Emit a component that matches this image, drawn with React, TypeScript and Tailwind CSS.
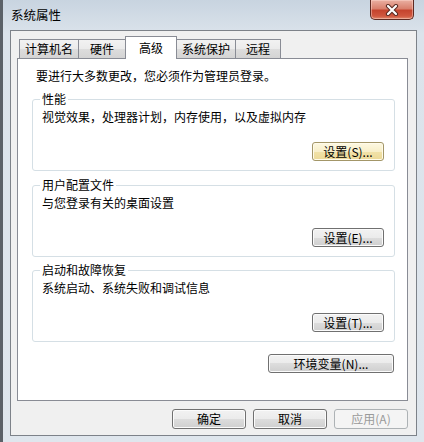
import type { ReactNode } from "react";

type Variant = "normal" | "hot" | "disabled";

const buttonStyles: Record<Variant, string> = {
  normal:
    "border-[#707070] text-black bg-[linear-gradient(#f2f2f2,#ebebeb_50%,#dddddd_50%,#cfcfcf)] shadow-[inset_0_0_0_1px_#fbfbfb]",
  hot: "border-[#a39668] text-black bg-[linear-gradient(#fdf8e2,#f8efc9_50%,#f1e2a9_50%,#ecd996)] shadow-[inset_0_0_0_1px_#fffbea]",
  disabled: "border-[#adb2b5] text-[#9a9a9a] bg-[#f4f4f4]",
};

const WinButton = ({
  children,
  className = "",
  variant = "normal",
}: {
  children: ReactNode;
  className?: string;
  variant?: Variant;
}) => (
  <div
    className={`flex items-center justify-center rounded-[3px] border leading-[16px] ${buttonStyles[variant]} ${className}`}
  >
    {children}
  </div>
);

const tabs = [
  { label: "计算机名", width: "w-[60px]" },
  { label: "硬件", width: "w-[48px]" },
  { label: "高级", width: "w-[52px]", active: true },
  { label: "系统保护", width: "w-[60px]" },
  { label: "远程", width: "w-[46px]" },
];

const GroupBox = ({
  title,
  description,
  button,
  className = "",
}: {
  title: string;
  description: string;
  button: string;
  className?: string;
}) => (
  <fieldset
    className={`ml-[14px] w-[363px] h-[80px] rounded-[3px] border border-[#d5dfe5] pl-[9px] pr-[10px] ${className}`}
  >
    <legend className="-ml-[2px] px-[2px] leading-[16px]">{title}</legend>
    <div className="flex flex-col">
      <div className="mt-[2px] leading-[16px]">{description}</div>
      <WinButton
        variant={button === "设置(S)..." ? "hot" : "normal"}
        className="mt-[17px] self-end w-[72px] h-[19px]"
      >
        {button}
      </WinButton>
    </div>
  </fieldset>
);

const CloseIcon = () => (
  <svg width="14" height="12" viewBox="0 0 14 12">
    <path d="M3 2 L11 10 M11 2 L3 10" stroke="#5a2a22" strokeWidth="4.2" strokeLinecap="round" />
    <path d="M3 2 L11 10 M11 2 L3 10" stroke="#ffffff" strokeWidth="2.2" strokeLinecap="round" />
  </svg>
);

export default function App() {
  return (
    <div className="w-[424px] h-[442px] overflow-hidden border-l-[3px] border-l-[#5b6168] bg-[linear-gradient(180deg,#c8d4e0,#dbe3eb_34px,#dfe6ed)] font-['Noto_Sans_CJK_SC','Noto_Sans',sans-serif] text-[12px] text-black">
      {/* title bar */}
      <div className="flex h-[30px] items-start">
        <div className="ml-[8px] mt-[7px] leading-[16px] text-[12.5px] text-black">系统属性</div>
        <div className="ml-auto mr-[10px] flex h-[20px] w-[44px] items-center justify-center rounded-b-[5px] border border-t-0 border-[#5e2a22] bg-[linear-gradient(#eab0a2,#d9806d_45%,#c5442e_55%,#d0573f_85%,#e08a6e)] shadow-[inset_0_0_0_1px_rgba(255,220,210,0.45)]">
          <CloseIcon />
        </div>
      </div>

      {/* client area */}
      <div className="ml-[7px] flex h-[406px] w-[407px] flex-col border border-[#7d8289] bg-[#f0f0f0] pl-[6px]">
        {/* tabs */}
        <div className="mt-[5px] flex h-[22px] items-end pl-[2px]">
          {tabs.map((tab, i) =>
            tab.active ? (
              <div
                key={tab.label}
                className={`relative z-10 -ml-px -mb-px flex h-[23px] ${tab.width} items-start justify-center border border-b-0 border-[#898c95] bg-white pt-[3px] leading-[16px]`}
              >
                {tab.label}
              </div>
            ) : (
              <div
                key={tab.label}
                className={`${i > 0 ? "-ml-px" : ""} flex h-[19px] ${tab.width} items-center justify-center border border-b-0 border-[#898c95] bg-[linear-gradient(#f2f2f2,#ebebeb_50%,#dddddd_50%,#d4d4d4)] leading-[16px]`}
              >
                {tab.label}
              </div>
            ),
          )}
        </div>

        {/* tab panel */}
        <div className="flex h-[343px] w-[391px] flex-col border border-[#898c95] bg-white">
          <div className="ml-[18px] mt-[9px] leading-[16px]">要进行大多数更改，您必须作为管理员登录。</div>
          <GroupBox
            className="mt-[7px]"
            title="性能"
            description="视觉效果，处理器计划，内存使用，以及虚拟内存"
            button="设置(S)..."
          />
          <GroupBox
            className="mt-[6px]"
            title="用户配置文件"
            description="与您登录有关的桌面设置"
            button="设置(E)..."
          />
          <GroupBox
            className="mt-[5px]"
            title="启动和故障恢复"
            description="系统启动、系统失败和调试信息"
            button="设置(T)..."
          />
          <WinButton className="ml-[250px] mt-[12px] h-[19px] w-[126px]">环境变量(N)...</WinButton>
        </div>

        {/* dialog buttons */}
        <div className="mt-[8px] flex w-[391px] justify-end gap-[7px]">
          <WinButton className="h-[20px] w-[74px]">确定</WinButton>
          <WinButton className="h-[20px] w-[74px]">取消</WinButton>
          <WinButton variant="disabled" className="h-[20px] w-[74px]">
            应用(A)
          </WinButton>
        </div>
      </div>
    </div>
  );
}
